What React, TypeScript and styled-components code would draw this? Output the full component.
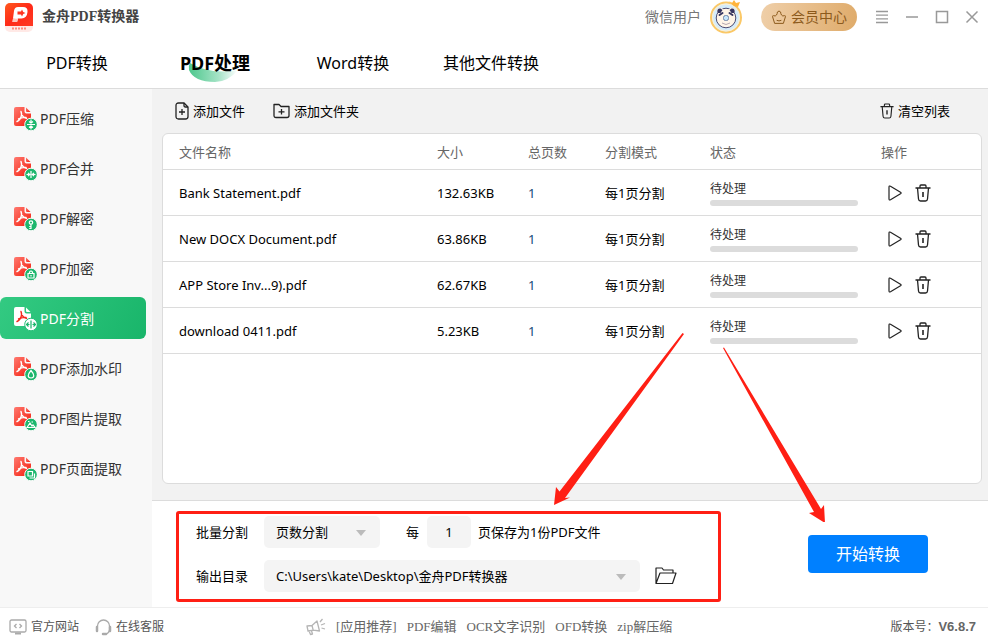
import React from "react";
import styled, { createGlobalStyle, css } from "styled-components";

const SANS = `"Noto Sans", "Noto Sans CJK SC", sans-serif`;
const SERIF = `"Liberation Serif", "Noto Sans CJK SC", serif`;
const LINE = "#dcdcdc";
const RED = "#ff1f14";

const GlobalStyle = createGlobalStyle`
  *, *::before, *::after { box-sizing: border-box; }
  body { margin: 0; background: #fff; color: #000; font: 13px/20px ${SANS}; }
  button, input, select { font: inherit; color: inherit; border: 0; padding: 0; margin: 0; background: none; }
  button { cursor: pointer; }
  a { color: inherit; text-decoration: none; }
  svg { display: block; flex: none; }
`;

const Window = styled.div`
  display: flex;
  flex-direction: column;
  min-height: 100vh;
`;

/* ---------- title bar ---------- */

const TitleBar = styled.header`
  display: flex;
  align-items: center;
  justify-content: space-between;
  height: 34px;
  padding: 0 8px 0 4px;
`;

const Brand = styled.div`
  display: flex;
  align-items: center;
  gap: 8px;
`;

const BrandName = styled.h1`
  margin: 0;
  font: 600 14px/20px ${SERIF};
  color: #444;
`;

const Account = styled.div`
  display: flex;
  align-items: center;
`;

const UserName = styled.span`
  margin-right: 8px;
  font-size: 14px;
  color: #777;
`;

const VipButton = styled.button`
  display: flex;
  align-items: center;
  gap: 4px;
  height: 28px;
  margin: 0 17px 0 18px;
  padding: 0 10px;
  border-radius: 14px;
  background: linear-gradient(100deg, #efcfa9, #dfab6a);
  color: #8c5a1c;
  font-size: 14px;
`;

const WindowButtons = styled.div`
  display: flex;
  gap: 14px;
`;

const WindowButton = styled.button`
  display: grid;
  place-items: center;
  width: 16px;
  height: 16px;
  color: #999;
`;

/* ---------- tabs ---------- */

const Tabs = styled.nav`
  display: grid;
  grid-template-columns: repeat(4, 138px);
  height: 55px;
  padding: 9px 8px 0;
  border-bottom: 1px solid ${LINE};
`;

const Tab = styled.button<{ $active?: boolean }>`
  position: relative;
  height: 40px;
  font-size: 16px;
  line-height: 40px;
  white-space: nowrap;
  ${(p) => p.$active && css`font-size: 18px; font-weight: 700;`}
`;

const TabLabel = styled.span`
  position: relative;
`;

const TabSwoosh = styled.svg`
  position: absolute;
  left: 42px;
  bottom: 0;
`;

/* ---------- body ---------- */

const Body = styled.div`
  display: flex;
  flex: 1;
`;

const Sidebar = styled.nav`
  display: flex;
  flex-direction: column;
  gap: 8px;
  width: 152px;
  padding: 8px 6px 8px 0;
  background: #f8f8f8;
`;

const SideItem = styled.button<{ $active?: boolean }>`
  display: flex;
  align-items: center;
  gap: 3px;
  height: 42px;
  padding: 2px 0 0 13px;
  border-radius: 6px;
  font-size: 14px;
  color: ${(p) => (p.$active ? "#fff" : "#333")};
  background: ${(p) => (p.$active ? "linear-gradient(120deg, #33ca82, #19b56a)" : "none")};
`;

const Main = styled.main`
  position: relative;
  display: flex;
  flex: 1;
  flex-direction: column;
`;

const ListArea = styled.section`
  display: flex;
  flex: 1;
  flex-direction: column;
  padding: 0 6px 16px 10px;
  background: #f2f2f2;
  border-bottom: 1px solid ${LINE};
`;

const Toolbar = styled.div`
  display: flex;
  align-items: center;
  gap: 28px;
  height: 44px;
  padding: 0 32px 0 13px;
`;

const ToolButton = styled.button<{ $end?: boolean }>`
  display: flex;
  align-items: center;
  gap: 4px;
  margin-left: ${(p) => (p.$end ? "auto" : "0")};
`;

const Card = styled.div`
  flex: 1;
  border: 1px solid ${LINE};
  border-radius: 6px;
  background: #fff;
`;

const FileTable = styled.table`
  width: 100%;
  table-layout: fixed;
  border-collapse: separate;
  border-spacing: 0;
`;

const HeadCell = styled.th<{ $width?: number }>`
  width: ${(p) => (p.$width ? `${p.$width}px` : "auto")};
  height: 36px;
  padding: 0 0 0 16px;
  border-bottom: 1px solid ${LINE};
  font-weight: 400;
  text-align: left;
  color: #666;
`;

const Cell = styled.td`
  height: 46px;
  padding: 0 0 0 16px;
  border-bottom: 1px solid ${LINE};
  white-space: nowrap;
`;

const PageCount = styled.span`
  color: #174a78;
`;

const Status = styled.div`
  display: flex;
  flex-direction: column;
  gap: 2px;
  width: 148px;
  font-size: 12px;
  line-height: 18px;
  color: #333;
`;

const Track = styled.div`
  height: 6px;
  border-radius: 3px;
  background: #dcdcdc;
`;

const RowActions = styled.div`
  display: flex;
  align-items: center;
  gap: 12px;
  padding-left: 6px;
`;

const IconButton = styled.button`
  display: grid;
  place-items: center;
`;

/* ---------- options ---------- */

const OptionsBar = styled.section`
  display: flex;
  align-items: flex-start;
  justify-content: space-between;
  padding: 10px 60px 5px 24px;
`;

const OptionsBox = styled.form`
  display: flex;
  flex-direction: column;
  gap: 12px;
  padding: 2px 41px 7px 17px;
  border: 3px solid ${RED};
  border-radius: 3px;
`;

const OptionRow = styled.div`
  display: flex;
  align-items: center;
  height: 32px;
`;

const OptionLabel = styled.label`
  width: 68px;
`;

const SelectWrap = styled.div<{ $width: number }>`
  position: relative;
  width: ${(p) => p.$width}px;
`;

const Select = styled.select`
  width: 100%;
  height: 32px;
  padding: 0 32px 0 12px;
  border-radius: 5px;
  background: #f4f4f4;
  appearance: none;
`;

const Caret = styled.svg`
  position: absolute;
  top: 14px;
  right: 14px;
  pointer-events: none;
`;

const EveryLabel = styled.label`
  margin: 0 8px 0 26px;
`;

const PagesInput = styled.input`
  width: 44px;
  height: 32px;
  margin-right: 7px;
  border-radius: 5px;
  background: #f4f4f4;
  text-align: center;
`;

const FolderButton = styled(IconButton)`
  margin-left: 15px;
`;

const StartButton = styled.button`
  width: 120px;
  height: 38px;
  margin-top: 24px;
  border-radius: 4px;
  background: #0080ff;
  color: #fff;
  font-size: 16px;
`;

const Arrows = styled.svg`
  position: absolute;
  right: 163px;
  bottom: 85px;
  pointer-events: none;
`;

/* ---------- footer ---------- */

const Footer = styled.footer`
  display: grid;
  grid-template-columns: 296px 1fr auto;
  align-items: center;
  height: 37px;
  padding: 2px 12px 0 9px;
  border-top: 1px solid #eee;
  font-size: 12px;
  color: #555;
`;

const FooterGroup = styled.div<{ $gap: number }>`
  display: flex;
  align-items: center;
  gap: ${(p) => p.$gap}px;
  white-space: nowrap;
`;

const FooterLink = styled.a`
  display: flex;
  align-items: center;
  gap: 4px;
`;

const Promo = styled(FooterGroup)`
  font: 13px/20px ${SERIF};
  color: #666;
`;

const Version = styled.strong`
  font: 700 13px/20px "Liberation Sans", sans-serif;
  color: #666;
`;

/* ---------- drawings ---------- */

const Logo = () => (
  <svg width="30" height="30" viewBox="0 0 30 30" aria-hidden="true">
    <defs>
      <linearGradient id="logo" x1="0" y1="0" x2="1" y2="1">
        <stop offset="0" stopColor="#ff5a1e" />
        <stop offset=".5" stopColor="#ff2a18" />
        <stop offset="1" stopColor="#ff3a24" />
      </linearGradient>
    </defs>
    <rect x="1" y="1" width="28" height="29" rx="5" fill="#ffe9e6" />
    <path d="M1 6a5 5 0 0 1 5-5h18a5 5 0 0 1 5 5v18H1z" fill="url(#logo)" />
    <path d="M8.500 20 10 9q.5-4 4-4h5q5 0 4.500 5-.5 6-6 6.500h-3.500l-1 3.500z" fill="#fff" />
    <path d="M13.500 9.500h3.500l1-2 1.200 2.500 2.300 1-2.300 1-1.200 2.500-1-2h-3.500z" fill="#ff3320" />
    <path d="M8.500 20l.6-4q2.500 1 5 .5l-1 3.500z" fill="#ffc4bb" />
    <path d="M8 26.500h14" stroke="#ff8a7e" strokeWidth="2" strokeDasharray="2 1" />
  </svg>
);

const Avatar = () => (
  <svg width="34" height="34" viewBox="0 0 34 34" role="img" aria-label="头像">
    <circle cx="17" cy="17.500" r="15" fill="#d3ebfb" stroke="#fbc866" strokeWidth="2" />
    <circle cx="17" cy="17.500" r="13.500" fill="none" stroke="#fff1d2" />
    <circle cx="17" cy="18" r="9.800" fill="#fff5e8" stroke="#4a4a70" />
    <path d="M8 13q-1-5 3-5 3 0 4 2h4q1-2 4-2 4 0 3 5l-3-1q-6-2-12 0z" fill="#fff5e8" />
    <path d="M8.500 13q-1-5 3-4.500l2 1.500-2 3zM25.500 13q1-5-3-4.500l-2 1.500 2 3z" fill="#373660" />
    <path d="M10.500 15l3-2M23.500 15l-3-2" stroke="#373660" strokeWidth="2" strokeLinecap="round" />
    <rect x="14.500" y="15.500" width="5" height="5" rx="2" fill="#c7e6fb" stroke="#6d84a8" />
    <path d="M13 23q4 3 8 0" fill="none" stroke="#b5a7b0" />
    <path d="M20 1l3 2 2-3 2 3 4-1-2 5-4-1z" fill="#ffb43c" />
  </svg>
);

const Crown = () => (
  <svg width="16" height="16" viewBox="0 0 16 16" fill="none" stroke="currentColor" strokeLinejoin="round" strokeLinecap="round" aria-hidden="true">
    <path d="M3.500 14 1.500 7.500q0-1 1-.8 2 .8 3-.7.900-1.500.900-3 1.600-2 3.200 0 0 1.500.9 3 1 1.500 3 .7 1-.2 1 .8l-2 6.500z" />
    <path d="M6 11.500q2 1 4 0" />
  </svg>
);

type Badge = "compress" | "merge" | "key" | "lock" | "split" | "drop" | "image" | "pages";

const BADGES: Record<Badge, React.ReactNode> = {
  compress: <path d="M14 18.500h8M18 13.500V17M18 23.500V20M16 15.500l2 1.500 2-1.500M16 21.500l2-1.500 2 1.500" />,
  merge: <path d="M18 15v7M13.500 18.500h3M22.500 18.500h-3M15 16.800l1.700 1.700-1.700 1.700M21 16.800l-1.700 1.700 1.700 1.700" />,
  key: <path d="M18 18.500V23M18 20.500h-1.800M18 22.500h-1.800M16.300 16.500a1.700 1.700 0 1 0 3.400 0 1.700 1.700 0 1 0-3.400 0" />,
  lock: <path d="M15 17.500h6V22h-6zM16.500 17.500V16q1.500-2 3 0v1.500M18 19v1.500" />,
  split: <path d="M18 14.500v8M16.500 18.500H14M19.500 18.500H22M15.500 16.500l-2 2 2 2M20.500 16.500l2 2-2 2" />,
  drop: <path d="M18 14.500q-5.500 6.500 0 7.500 5.500-1 0-7.500z" />,
  image: <path d="M14 21.500l3-4.500 2 3 1-1 2 2.500zM15 15.500h1.500M18.500 16H20" />,
  pages: <path d="M15 15.500h4.500v4.500H15zM16.500 22H21.500v-4.500" />,
};

const PdfIcon = ({ badge, active }: { badge: Badge; active?: boolean }) => {
  const page = active ? "#fff" : "url(#pdf)";
  const mark = active ? "#f4281c" : "#fff";
  return (
    <svg width="24" height="26" viewBox="0 0 24 26" aria-hidden="true">
      <defs>
        <linearGradient id="pdf" x1="0" y1="0" x2="1" y2="1">
          <stop offset="0" stopColor="#ff7a70" />
          <stop offset="1" stopColor="#f41c0c" />
        </linearGradient>
      </defs>
      <path d="M3 1h8.500v4.500q0 2 2 2H18V17q0 3-3 3H3q-2 0-2-2V3q0-2 2-2z" fill={page} />
      <path d="M13 1.500 17.500 6H14q-1 0-1-1z" fill={page} />
      <path
        d="M8 5.500q1.500 3.500-1 7.500-1.500 2-3 2.500M8 5.500q0 3.500 2.500 5.500 1.500 1 3 1.300M5.500 13q4-2 7.500-1.500"
        fill="none"
        stroke={mark}
        strokeWidth="1.400"
        strokeLinecap="round"
      />
      <circle cx="18" cy="18.500" r="6.300" fill={active ? "#fff" : "#1db76e"} stroke={active ? "#26c079" : "#f8f8f8"} />
      <g fill="none" stroke={active ? "#19b56a" : "#fff"} strokeWidth="1.200">{BADGES[badge]}</g>
    </svg>
  );
};

const AddFileIcon = () => (
  <svg width="14" height="18" viewBox="0 0 14 18" fill="none" stroke="#222" strokeWidth="1.300" aria-hidden="true">
    <path d="M3.500 1H9l4 4v9.500q0 2.500-2.500 2.500h-7Q1 17 1 14.500v-11Q1 1 3.500 1z" />
    <path d="M9 1v2.500Q9 5 10.500 5H13M7 7v6M4 10h6" />
  </svg>
);

const AddFolderIcon = () => (
  <svg width="17" height="16" viewBox="0 0 17 16" fill="none" stroke="#222" strokeWidth="1.300" aria-hidden="true">
    <path d="M1 1.500h5l2 2h8v9q0 2-2 2H3q-2 0-2-2z" strokeLinejoin="round" />
    <path d="M8.500 6v5.500M5.500 8.800h6" />
  </svg>
);

const TrashIcon = ({ width = 14, height = 16 }: { width?: number; height?: number }) => (
  <svg width={width} height={height} viewBox="0 0 16 18" fill="none" stroke="#222" strokeWidth="1.300" aria-hidden="true">
    <path d="M.5 4h15M5 4V2q0-1 1-1h4q1 0 1 1v2M2.500 4l1 11q.2 2 2 2h5q1.800 0 2-2l1-11" />
    <path d="M8 8v5" strokeWidth="1.600" />
  </svg>
);

const PlayIcon = () => (
  <svg width="16" height="18" viewBox="0 0 16 18" fill="none" stroke="#222" strokeWidth="1.200" aria-hidden="true">
    <path d="M2 3.200q0-1.700 1.500-1l10 6q1.200.8 0 1.600l-10 6q-1.500.7-1.500-1z" />
  </svg>
);

const FolderIcon = () => (
  <svg width="22" height="18" viewBox="0 0 22 18" fill="none" stroke="#222" strokeWidth="1.200" aria-hidden="true">
    <path d="M1 16.500V1h6l1.500 2H18v3M1 16.500 5 6h16l-3.500 10.500z" strokeLinejoin="round" />
  </svg>
);

const CaretIcon = () => (
  <Caret width="10" height="6" viewBox="0 0 10 6" aria-hidden="true">
    <path d="M0 0h10L5 6z" fill="#bbb" />
  </Caret>
);

/* ---------- data ---------- */

const SIDE_ITEMS: { label: string; badge: Badge }[] = [
  { label: "PDF压缩", badge: "compress" },
  { label: "PDF合并", badge: "merge" },
  { label: "PDF解密", badge: "key" },
  { label: "PDF加密", badge: "lock" },
  { label: "PDF分割", badge: "split" },
  { label: "PDF添加水印", badge: "drop" },
  { label: "PDF图片提取", badge: "image" },
  { label: "PDF页面提取", badge: "pages" },
];

const FILES = [
  { name: "Bank Statement.pdf", size: "132.63KB" },
  { name: "New DOCX Document.pdf", size: "63.86KB" },
  { name: "APP Store Inv...9).pdf", size: "62.67KB" },
  { name: "download 0411.pdf", size: "5.23KB" },
];

const PROMO_LINKS = ["[应用推荐]", "PDF编辑", "OCR文字识别", "OFD转换", "zip解压缩"];

export default function App() {
  return (
    <Window>
      <GlobalStyle />
      <TitleBar>
        <Brand>
          <Logo />
          <BrandName>金舟PDF转换器</BrandName>
        </Brand>
        <Account>
          <UserName>微信用户</UserName>
          <Avatar />
          <VipButton type="button">
            <Crown />
            会员中心
          </VipButton>
          <WindowButtons>
            <WindowButton type="button" aria-label="菜单">
              <svg width="14" height="14" viewBox="0 0 14 14" stroke="currentColor" strokeWidth="1.300"><path d="M1 1.500h12M1 5.200h12M1 8.800h12M1 12.500h12" /></svg>
            </WindowButton>
            <WindowButton type="button" aria-label="最小化">
              <svg width="14" height="14" viewBox="0 0 14 14" stroke="currentColor" strokeWidth="1.500"><path d="M1 7h12" /></svg>
            </WindowButton>
            <WindowButton type="button" aria-label="最大化">
              <svg width="14" height="14" viewBox="0 0 14 14" fill="none" stroke="currentColor" strokeWidth="1.500"><path d="M1.500 1.500h11v11h-11z" /></svg>
            </WindowButton>
            <WindowButton type="button" aria-label="关闭">
              <svg width="14" height="14" viewBox="0 0 14 14" stroke="currentColor" strokeWidth="1.500"><path d="M1.500 1.500l11 11M12.500 1.500l-11 11" /></svg>
            </WindowButton>
          </WindowButtons>
        </Account>
      </TitleBar>

      <Tabs>
        <Tab type="button">PDF转换</Tab>
        <Tab type="button" $active>
          <TabSwoosh width="52" height="22" viewBox="0 0 52 22" aria-hidden="true">
            <defs>
              <linearGradient id="swoosh">
                <stop offset="0" stopColor="#4cc78c" />
                <stop offset=".6" stopColor="#a5e3c6" />
                <stop offset="1" stopColor="#fff" />
              </linearGradient>
            </defs>
            <path d="M2 2Q22 14 50 9 40 21 27 21 6 21 1 9 0 5 2 2z" fill="url(#swoosh)" />
          </TabSwoosh>
          <TabLabel>PDF处理</TabLabel>
        </Tab>
        <Tab type="button">Word转换</Tab>
        <Tab type="button">其他文件转换</Tab>
      </Tabs>

      <Body>
        <Sidebar>
          {SIDE_ITEMS.map(({ label, badge }) => (
            <SideItem key={label} type="button" $active={badge === "split"}>
              <PdfIcon badge={badge} active={badge === "split"} />
              {label}
            </SideItem>
          ))}
        </Sidebar>

        <Main>
          <ListArea>
            <Toolbar>
              <ToolButton type="button"><AddFileIcon />添加文件</ToolButton>
              <ToolButton type="button"><AddFolderIcon />添加文件夹</ToolButton>
              <ToolButton type="button" $end><TrashIcon />清空列表</ToolButton>
            </Toolbar>
            <Card>
              <FileTable>
                <thead>
                  <tr>
                    <HeadCell>文件名称</HeadCell>
                    <HeadCell $width={91}>大小</HeadCell>
                    <HeadCell $width={77}>总页数</HeadCell>
                    <HeadCell $width={105}>分割模式</HeadCell>
                    <HeadCell $width={171}>状态</HeadCell>
                    <HeadCell $width={116}>操作</HeadCell>
                  </tr>
                </thead>
                <tbody>
                  {FILES.map((file) => (
                    <tr key={file.name}>
                      <Cell>{file.name}</Cell>
                      <Cell>{file.size}</Cell>
                      <Cell><PageCount>1</PageCount></Cell>
                      <Cell>每1页分割</Cell>
                      <Cell>
                        <Status>
                          待处理
                          <Track />
                        </Status>
                      </Cell>
                      <Cell>
                        <RowActions>
                          <IconButton type="button" aria-label="开始"><PlayIcon /></IconButton>
                          <IconButton type="button" aria-label="删除"><TrashIcon width={16} height={18} /></IconButton>
                        </RowActions>
                      </Cell>
                    </tr>
                  ))}
                </tbody>
              </FileTable>
            </Card>
          </ListArea>

          <OptionsBar>
            <OptionsBox>
              <OptionRow>
                <OptionLabel htmlFor="mode">批量分割</OptionLabel>
                <SelectWrap $width={116}>
                  <Select id="mode"><option>页数分割</option></Select>
                  <CaretIcon />
                </SelectWrap>
                <EveryLabel htmlFor="pages">每</EveryLabel>
                <PagesInput id="pages" defaultValue="1" />
                <span>页保存为1份PDF文件</span>
              </OptionRow>
              <OptionRow>
                <OptionLabel htmlFor="folder">输出目录</OptionLabel>
                <SelectWrap $width={376}>
                  <Select id="folder"><option>{"C:\\Users\\kate\\Desktop\\金舟PDF转换器"}</option></Select>
                  <CaretIcon />
                </SelectWrap>
                <FolderButton type="button" aria-label="打开目录"><FolderIcon /></FolderButton>
              </OptionRow>
            </OptionsBox>
            <StartButton type="button">开始转换</StartButton>
          </OptionsBar>

          <Arrows width="272" height="190" viewBox="0 0 272 190" fill={RED} aria-hidden="true">
            <path d="M129.500 1 131 2 12 166 17 165.500 1 173 3 155 6.500 159.500z" />
            <path d="M170 16 171 15.500 268 177 271 173 272 191 256 181 261 180z" />
          </Arrows>
        </Main>
      </Body>

      <Footer>
        <FooterGroup $gap={16}>
          <FooterLink href="#site">
            <svg width="18" height="16" viewBox="0 0 18 16" fill="none" stroke="#aaa" strokeWidth="1.300" aria-hidden="true">
              <rect x="1" y="1" width="16" height="12" rx="1.500" />
              <path d="M7.500 5 5.500 7l2 2M10.500 5l2 2-2 2" />
              <path d="M6 14.500h6" strokeWidth="2" />
            </svg>
            官方网站
          </FooterLink>
          <FooterLink href="#support">
            <svg width="17" height="17" viewBox="0 0 17 17" fill="none" stroke="#aaa" strokeWidth="1.300" aria-hidden="true">
              <path d="M2.500 8V7a6 6 0 0 1 12 0v4q-1 4-4.500 4" />
              <path d="M2 8v4M15 8v4M8 15h3" strokeWidth="2.500" strokeLinecap="round" />
            </svg>
            在线客服
          </FooterLink>
        </FooterGroup>
        <Promo $gap={10}>
          <svg width="21" height="18" viewBox="0 0 21 18" fill="none" stroke="#b5b5b5" strokeWidth="1.300" aria-hidden="true">
            <path d="M2 8l5-.5L12 3l2.500 10-6-.8L3 13zM7 7.500l1.200 4.700M4 13l1.500 3.500 2-.5-1-3.300" strokeLinejoin="round" />
            <path d="M15 4l2.500-3M16 7l4-1.500M16.500 10l3.500 1" />
          </svg>
          {PROMO_LINKS.map((label) => (
            <a key={label} href="#app">{label}</a>
          ))}
        </Promo>
        <div>
          版本号：<Version>V6.8.7</Version>
        </div>
      </Footer>
    </Window>
  );
}
